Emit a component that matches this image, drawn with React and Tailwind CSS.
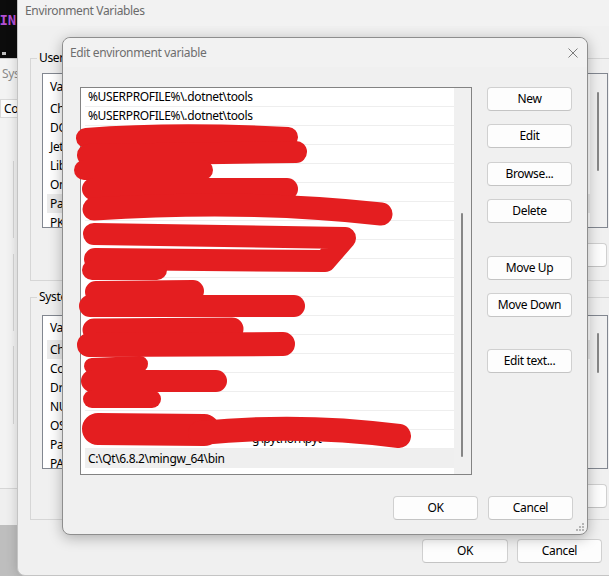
import React from "react";

const BS = "\\";

const editRows = [
  { t: `%USERPROFILE%${BS}.dotnet${BS}tools` },
  { t: `%USERPROFILE%${BS}.dotnet${BS}tools` },
  { t: "" },
  { t: "" },
  { t: "" },
  { t: "" },
  { t: "" },
  { t: "" },
  { t: "" },
  { t: "" },
  { t: "" },
  { t: "" },
  { t: "" },
  { t: "" },
  { t: "" },
  { t: "" },
  { t: "" },
  { t: "" },
  { t: `g${BS}python${BS}pyt`, pad: "pl-[167px]" },
  { t: `C:${BS}Qt${BS}6.8.2${BS}mingw_64${BS}bin` },
];

const userVars = [
  ["ChocolateyLastPathUpdate", "133806628301234567"],
  ["DOTNET_ROOT", "C:\\Program Files\\dotnet"],
  ["JetBrains Rider", "C:\\Program Files\\JetBrains\\Rider\\bin;"],
  ["Lib", "C:\\lib"],
  ["OneDrive", "C:\\Users\\user\\OneDrive"],
  ["Path", "%USERPROFILE%\\.dotnet\\tools;"],
  ["PKG_CONFIG_PATH", "C:\\msys64\\ucrt64\\lib\\pkgconfig"],
];

const sysVars = [
  ["ChocolateyInstall", "C:\\ProgramData\\chocolatey"],
  ["ComSpec", "C:\\WINDOWS\\system32\\cmd.exe"],
  ["DriverData", "C:\\Windows\\System32\\Drivers\\DriverData"],
  ["NUMBER_OF_PROCESSORS", "16"],
  ["OS", "Windows_NT"],
  ["Path", "C:\\WINDOWS\\system32;C:\\WINDOWS;"],
  ["PATHEXT", ".COM;.EXE;.BAT;.CMD;.VBS;.VBE;.JS"],
];

function Btn({ children, w = "w-[85px]", extra = "" }) {
  return (
    <div
      className={`${w} ${extra} h-[24px] shrink-0 flex items-center justify-center rounded-[4px] border border-[#d0d0d0] border-b-[#c4c4c4] bg-[#fdfdfd] text-black whitespace-nowrap`}
    >
      {children}
    </div>
  );
}

function VarList({ items, selected, headerH, listH, thumbTop, thumbH }) {
  return (
    <div className={`ml-[11px] w-[566px] ${listH} flex border border-[#828790] bg-white overflow-hidden`}>
      <div className="flex-1 flex flex-col">
        <div className={`${headerH} shrink-0 flex items-center`}>
          <div className="w-[170px] pl-[7px] border-r border-[#e5e5e5]">Variable</div>
          <div className="pl-[7px]">Value</div>
        </div>
        {items.map(([n, v], i) => (
          <div
            key={i}
            className={`h-[19px] shrink-0 ml-[4px] flex items-center ${i === selected ? "bg-[#ebebeb]" : ""}`}
          >
            <div className="w-[166px] pl-[3px] whitespace-nowrap overflow-hidden">{n}</div>
            <div className="pl-[7px] whitespace-nowrap overflow-hidden">{v}</div>
          </div>
        ))}
      </div>
      <div className="w-[17px] shrink-0 bg-[#f0f0f0] flex flex-col">
        <div className={`${thumbTop} ${thumbH} ml-[7px] w-[2px] rounded-full bg-[#878787]`} />
      </div>
    </div>
  );
}

export default function App() {
  return (
    <div className="relative w-[609px] h-[576px] overflow-hidden bg-[#bebebe] font-['Noto_Sans',sans-serif] text-[12px] leading-[16px] tracking-[-0.35px] text-black">
      {/* terminal behind */}
      <div className="absolute left-0 top-0 w-[17px] h-[58px] bg-[#0c0c0c] overflow-hidden">
        <div className="mt-[12px] -ml-[9px] whitespace-nowrap font-['DejaVu_Sans_Mono',monospace] text-[14px] leading-[16px] tracking-normal font-bold text-[#b24fd4]">
          MIN
        </div>
        <div className="mt-[24px] ml-[2px] h-[3px] w-[4px] bg-[#bdbdbd]" />
      </div>

      {/* system properties window behind */}
      <div className="absolute left-0 top-[58px] w-[30px] h-[467px] bg-[#f3f3f3] border-t border-[#cfcfcf] flex flex-col">
        <div className="pl-[2px] pt-[7px] whitespace-nowrap text-[#8a8a8a]">System Properties</div>
        <div className="mt-[17px] h-[19px] flex items-center pl-[3px] border border-[#d9d9d9] bg-[#fbfbfb] whitespace-nowrap overflow-hidden">
          Computer Name
        </div>
        <div className="mt-[43px] ml-[13px] h-[77px] border-l border-[#d6d6d6]" />
        <div className="mt-[16px] ml-[13px] h-[77px] border-l border-[#d6d6d6]" />
        <div className="mt-[15px] ml-[13px] h-[78px] border-l border-[#d6d6d6]" />
        <div className="mt-[64px] flex-1 border-t border-[#d6d6d6] bg-[#efefef]" />
      </div>

      {/* Environment Variables window */}
      <div className="absolute left-[17px] top-[-10px] w-[620px] h-[586px] rounded-[8px] border border-[#c4c4c4] bg-[#f0f0f0] shadow-[0_0_12px_rgba(0,0,0,0.18)] overflow-hidden">
        <div className="h-[35px] pl-[7px] pt-[12px] text-[#6b6b6b] bg-[#f2f2f2]">Environment Variables</div>
        <div className="flex flex-col">
          <fieldset className="mt-[24px] ml-[12px] w-[590px] border border-[#d6d6d6] pb-[13px]">
            <legend className="ml-[6px] px-[2px] leading-[16px]">User variables for user</legend>
            <div className="mt-[7px]">
              <VarList items={userVars} selected={5} headerH="h-[25px]" listH="h-[155px]" thumbTop="mt-[18px]" thumbH="h-[79px]" />
            </div>
            <div className="mt-[15px] ml-[11px] w-[565px] flex justify-end gap-[8px]">
              <Btn w="w-[86px]">New...</Btn>
              <Btn w="w-[86px]">Edit...</Btn>
              <Btn w="w-[86px]">Delete</Btn>
            </div>
          </fieldset>
          <fieldset className="mt-[8px] ml-[12px] w-[590px] border border-[#d6d6d6] pb-[11px]">
            <legend className="ml-[6px] px-[2px] leading-[16px]">System variables</legend>
            <div className="mt-[10px]">
              <VarList items={sysVars} selected={0} headerH="h-[24px]" listH="h-[154px]" thumbTop="mt-[17px]" thumbH="h-[40px]" />
            </div>
            <div className="mt-[15px] ml-[11px] w-[565px] flex justify-end gap-[8px]">
              <Btn w="w-[86px]">New...</Btn>
              <Btn w="w-[86px]">Edit...</Btn>
              <Btn w="w-[86px]">Delete</Btn>
            </div>
          </fieldset>
          <div className="mt-[19px] ml-[12px] w-[590px] pr-[18px] flex justify-end gap-[9px]">
            <Btn w="w-[86px]">OK</Btn>
            <Btn w="w-[85px]">Cancel</Btn>
          </div>
        </div>
      </div>

      {/* Edit environment variable dialog */}
      <div className="absolute left-[62px] top-[37px] w-[526px] h-[498px] rounded-[8px] border border-[#8e8e8e] bg-[#f0f0f0] shadow-[0_3px_14px_rgba(0,0,0,0.28)] flex flex-col">
        <div className="h-[29px] shrink-0 flex items-center justify-between rounded-t-[8px] bg-[#f2f2f2] pl-[7px] pr-[9px]">
          <span className="text-[#6e6e6e]">Edit environment variable</span>
          <svg width="10" height="10" viewBox="0 0 10 10" className="block">
            <path d="M0.5 0.5 L9.5 9.5 M9.5 0.5 L0.5 9.5" stroke="#7c7c7c" strokeWidth="1" fill="none" />
          </svg>
        </div>
        <div className="flex pl-[17px] mt-[20px]">
          <div className="w-[392px] h-[388px] shrink-0 flex border border-[#838383] bg-white overflow-hidden">
            <div className="w-[373px] flex flex-col">
              {editRows.map((r, i) => (
                <div
                  key={i}
                  className={`h-[19px] shrink-0 ml-[4px] ${r.pad || "pl-[3px]"} flex items-center whitespace-nowrap overflow-hidden ${
                    i === editRows.length - 1 ? "bg-[#efefef]" : "border-b border-[#eeeeee]"
                  }`}
                >
                  {r.t}
                </div>
              ))}
            </div>
            <div className="flex-1 bg-[#f0f0f0] flex flex-col">
              <div className="mt-[125px] ml-[7px] w-[2px] h-[244px] rounded-full bg-[#868686]" />
            </div>
          </div>
          <div className="ml-[15px] flex flex-col">
            <Btn>New</Btn>
            <Btn extra="mt-[13px]">Edit</Btn>
            <Btn extra="mt-[14px]">Browse...</Btn>
            <Btn extra="mt-[13px]">Delete</Btn>
            <Btn extra="mt-[33px]">Move Up</Btn>
            <Btn extra="mt-[13px]">Move Down</Btn>
            <Btn extra="mt-[32px]">Edit text...</Btn>
          </div>
        </div>
        <div className="mt-[21px] pr-[14px] flex justify-end gap-[10px]">
          <Btn>OK</Btn>
          <Btn>Cancel</Btn>
        </div>
        <svg width="8" height="8" viewBox="0 0 8 8" className="absolute right-[3px] bottom-[3px]">
          <g fill="#b5b5b5">
            <rect x="6" y="0" width="2" height="2" />
            <rect x="3" y="3" width="2" height="2" />
            <rect x="6" y="3" width="2" height="2" />
            <rect x="0" y="6" width="2" height="2" />
            <rect x="3" y="6" width="2" height="2" />
            <rect x="6" y="6" width="2" height="2" />
          </g>
        </svg>
      </div>

      {/* red redaction scribbles */}
      <svg className="absolute inset-0 pointer-events-none" width="609" height="576" viewBox="0 0 609 576">
        <g fill="none" stroke="#e41e20" strokeLinecap="round" strokeLinejoin="round">
          <path d="M86 138 C150 133 230 134 288 137" strokeWidth="20" />
          <path d="M88 155 L296 152" strokeWidth="22" />
          <path d="M84 170 L203 170" strokeWidth="20" />
          <path d="M93 189 L287 189" strokeWidth="22" />
          <path d="M94 209 Q250 199 381 214" strokeWidth="23" />
          <path d="M94 234 L345 238 L325 261 L95 259" strokeWidth="22" />
          <path d="M92 270 L157 270" strokeWidth="20" />
          <path d="M96 292 L193 291" strokeWidth="22" />
          <path d="M90 306 L294 306" strokeWidth="22" />
          <path d="M94 330 L232 329" strokeWidth="23" />
          <path d="M89 345 L283 344" strokeWidth="24" />
          <path d="M92 366 L140 364" strokeWidth="16" />
          <path d="M92 381 L216 381" strokeWidth="22" />
          <path d="M92 399 L152 399" strokeWidth="18" />
          <path d="M98 429 L204 430" strokeWidth="32" />
          <path d="M200 433 Q300 423 399 436" strokeWidth="24" />
        </g>
      </svg>
    </div>
  );
}
